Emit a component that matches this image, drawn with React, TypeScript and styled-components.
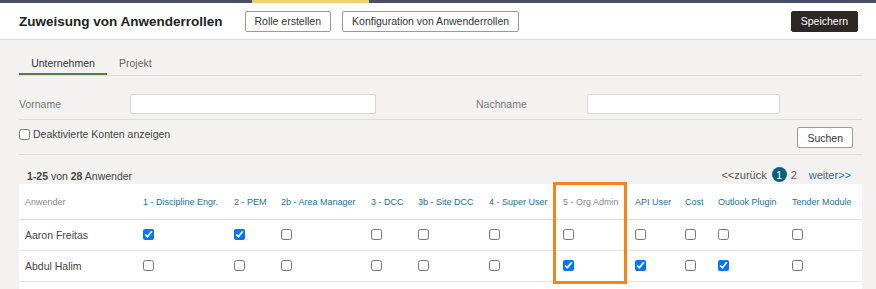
import React from "react";
import styled, { createGlobalStyle } from "styled-components";

const GlobalStyle = createGlobalStyle`
  html, body {
    margin: 0;
    padding: 0;
    background: #f3f2f1;
    font-family: "Liberation Sans", Arial, sans-serif;
    color: #333;
  }
`;

const Page = styled.div`
  width: 876px;
  height: 289px;
  overflow: hidden;
  background: #f3f2f1;
`;

const TopStrip = styled.div`
  height: 3px;
  background: #4b4f66;
  display: flex;
  padding-left: 252px;
`;

const StripAccent = styled.div`
  width: 117px;
  background: #f2cf6e;
`;

const Header = styled.div`
  height: 36px;
  background: #fff;
  border-bottom: 1px solid #dcdcdc;
  display: flex;
  align-items: center;
  gap: 11px;
  padding: 0 18px 0 19px;
`;

const Title = styled.h1`
  margin: 0 11px 0 0;
  font-size: 13.5px;
  font-weight: bold;
  color: #222;
`;

const Button = styled.button<{ $dark?: boolean }>`
  height: 21px;
  padding: 0 9px;
  font-family: "Liberation Sans", Arial, sans-serif;
  font-size: 10.5px;
  border-radius: 2px;
  border: 1px solid ${(p) => (p.$dark ? "#2d2826" : "#9a9a9a")};
  background: ${(p) => (p.$dark ? "#2d2826" : "#fff")};
  color: ${(p) => (p.$dark ? "#fff" : "#333")};
  cursor: pointer;
`;

const Spacer = styled.div`
  flex: 1;
`;

const Body = styled.div`
  padding: 12px 14px 0 19px;
`;

const Tabs = styled.div`
  display: flex;
  border-bottom: 1px solid #dedcda;
`;

const Tab = styled.div<{ $active?: boolean }>`
  width: ${(p) => (p.$active ? "88px" : "auto")};
  padding: ${(p) => (p.$active ? "2px 0 0" : "2px 12px 0")};
  height: 19px;
  line-height: 19px;
  text-align: center;
  font-size: 10.5px;
  color: ${(p) => (p.$active ? "#333" : "#666")};
  border-bottom: 2px solid ${(p) => (p.$active ? "#5b7b47" : "transparent")};
`;

const FormRow = styled.div`
  display: grid;
  grid-template-columns: 111px 246px 100px 111px 193px;
  align-items: center;
  padding: 18px 0 5px;
  border-bottom: 1px solid #dedcda;
`;

const Label = styled.label`
  font-size: 10.5px;
  color: #777;
`;

const TextInput = styled.input`
  box-sizing: border-box;
  height: 20px;
  border: 1px solid #d6d6d6;
  border-radius: 2px;
  background: #fff;
  margin: 0;
`;

const OptionRow = styled.div`
  display: flex;
  align-items: flex-start;
  padding: 7px 9px 6px 0;
  border-bottom: 1px solid #dedcda;
`;

const CheckLabel = styled.label`
  display: flex;
  align-items: center;
  font-size: 10.5px;
  color: #444;
  gap: 3px;
  margin-top: 1px;
`;

const Box = styled.input`
  width: 11px;
  height: 11px;
  margin: 0;
`;

const SummaryRow = styled.div`
  display: flex;
  align-items: flex-end;
  height: 29px;
  box-sizing: border-box;
  padding: 0 11px 2px 8px;
  font-size: 10.5px;
  color: #444;
`;

const Pager = styled.div`
  display: flex;
  align-items: center;
  gap: 4px;
  font-size: 11px;
  color: #555;
`;

const PageLink = styled.span<{ $blue?: boolean }>`
  color: ${(p) => (p.$blue ? "#1f6f9a" : "#555")};
  margin-left: ${(p) => (p.$blue ? "8px" : "0")};
`;

const PageCurrent = styled.span`
  width: 15px;
  height: 15px;
  border-radius: 50%;
  background: #0e5f7e;
  color: #fff;
  font-size: 10.5px;
  display: inline-flex;
  align-items: center;
  justify-content: center;
  margin-left: 1px;
`;

const TableWrap = styled.div`
  position: relative;
  background: #fff;
  width: 843px;
  height: 110px;
`;

const Table = styled.table`
  border-collapse: collapse;
  table-layout: fixed;
  width: 843px;
`;

const Th = styled.th<{ $muted?: boolean }>`
  height: 34px;
  padding: 1px 0 0 6px;
  text-align: left;
  font-weight: normal;
  font-size: 9px;
  white-space: nowrap;
  color: ${(p) => (p.$muted ? "#888" : "#1f6f9a")};
  border-bottom: 1px solid #dedede;
`;

const Td = styled.td`
  height: 30px;
  padding: 0 0 0 6px;
  font-size: 10.5px;
  color: #444;
  border-bottom: 1px solid #e6e6e6;
`;

const Highlight = styled.div`
  position: absolute;
  left: 534px;
  top: -2px;
  width: 68px;
  height: 96px;
  border: 3px solid #f7831f;
  pointer-events: none;
`;

const columns = [
  { name: "Anwender", w: 118, muted: true },
  { name: "1 - Discipline Engr.", w: 91 },
  { name: "2 - PEM", w: 47 },
  { name: "2b - Area Manager", w: 90 },
  { name: "3 - DCC", w: 47 },
  { name: "3b - Site DCC", w: 71 },
  { name: "4 - Super User", w: 74 },
  { name: "5 - Org Admin", w: 72, muted: true },
  { name: "API User", w: 50 },
  { name: "Cost", w: 33 },
  { name: "Outlook Plugin", w: 74 },
  { name: "Tender Module", w: 76 },
];

const users = [
  { name: "Aaron Freitas", roles: [true, true, false, false, false, false, false, false, false, false, false] },
  { name: "Abdul Halim", roles: [false, false, false, false, false, false, true, true, false, true, false] },
];

export default function App() {
  return (
    <Page>
      <GlobalStyle />
      <TopStrip>
        <StripAccent />
      </TopStrip>
      <Header>
        <Title>Zuweisung von Anwenderrollen</Title>
        <Button>Rolle erstellen</Button>
        <Button>Konfiguration von Anwenderrollen</Button>
        <Spacer />
        <Button $dark>Speichern</Button>
      </Header>
      <Body>
        <Tabs>
          <Tab $active>Unternehmen</Tab>
          <Tab>Projekt</Tab>
        </Tabs>
        <FormRow>
          <Label>Vorname</Label>
          <TextInput type="text" />
          <span />
          <Label>Nachname</Label>
          <TextInput type="text" />
        </FormRow>
        <OptionRow>
          <CheckLabel>
            <Box type="checkbox" />
            Deaktivierte Konten anzeigen
          </CheckLabel>
          <Spacer />
          <Button>Suchen</Button>
        </OptionRow>
        <SummaryRow>
          <span>
            <b>1-25</b> von <b>28</b> Anwender
          </span>
          <Spacer />
          <Pager>
            <span>&lt;&lt;zurück</span>
            <PageCurrent>1</PageCurrent>
            <PageLink>2</PageLink>
            <PageLink $blue>weiter&gt;&gt;</PageLink>
          </Pager>
        </SummaryRow>
        <TableWrap>
          <Table>
            <colgroup>
              {columns.map((c) => (
                <col key={c.name} style={{ width: c.w }} />
              ))}
            </colgroup>
            <thead>
              <tr>
                {columns.map((c) => (
                  <Th key={c.name} $muted={c.muted}>
                    {c.name}
                  </Th>
                ))}
              </tr>
            </thead>
            <tbody>
              {users.map((u) => (
                <tr key={u.name}>
                  <Td>{u.name}</Td>
                  {u.roles.map((r, i) => (
                    <Td key={i}>
                      <Box type="checkbox" defaultChecked={r} />
                    </Td>
                  ))}
                </tr>
              ))}
            </tbody>
          </Table>
          <Highlight />
        </TableWrap>
      </Body>
    </Page>
  );
}
